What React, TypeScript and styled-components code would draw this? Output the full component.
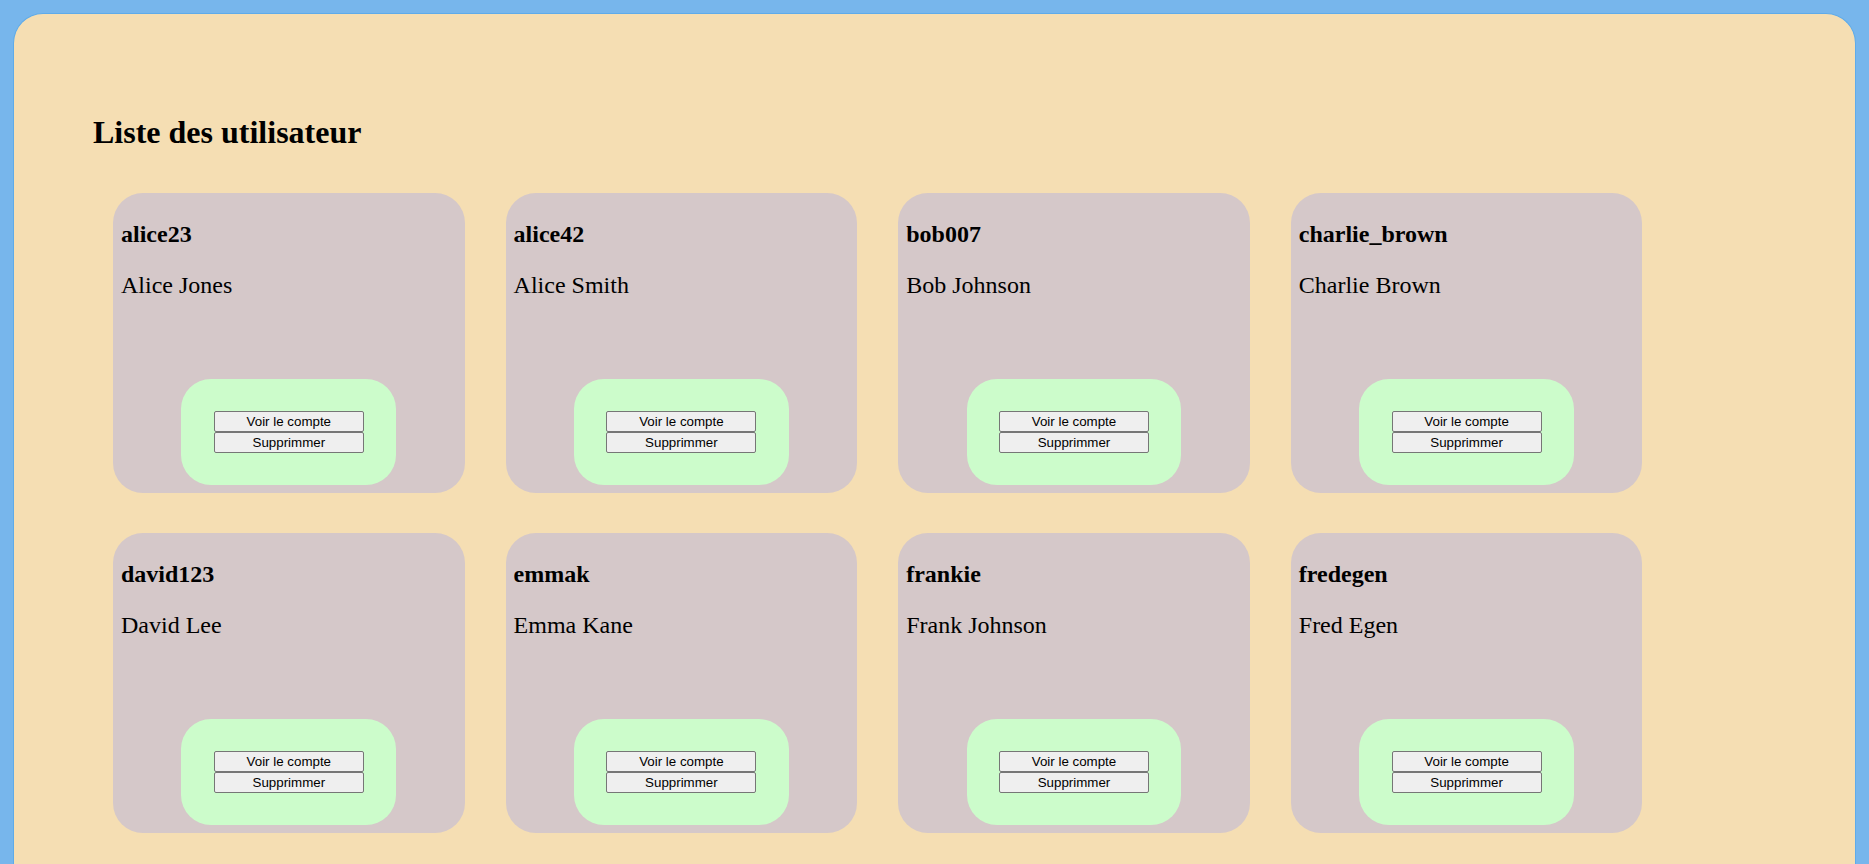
import React from "react";
import styled, { createGlobalStyle } from "styled-components";

const GlobalStyle = createGlobalStyle`
  html, body {
    margin: 0;
    padding: 0;
    background: #77b6ec;
  }
  body {
    font-family: "Liberation Serif", "Times New Roman", serif;
    color: #000;
  }
  #root {
    padding: 13px 13px 0 13px;
  }
`;

const Panel = styled.main`
  background: #f5deb3;
  border: 1px solid #5eabea;
  border-bottom: none;
  border-radius: 30px 30px 0 0;
  padding: 79px 79px 60px 79px;
  min-height: 900px;
`;

const Title = styled.h1`
  font-size: 32px;
  font-weight: bold;
  margin: 21.44px 0;
`;

const CardGrid = styled.div`
  display: flex;
  flex-wrap: wrap;
  column-gap: 41px;
  row-gap: 40px;
  padding: 20px;
`;

const Card = styled.section`
  box-sizing: border-box;
  width: 351.6px;
  height: 300px;
  background: #d5c8c9;
  border-radius: 30px;
  padding: 8px;
  display: flex;
  flex-direction: column;
`;

const Username = styled.h2`
  font-size: 24px;
  font-weight: bold;
  margin: 19.92px 0 0 0;
`;

const FullName = styled.p`
  font-size: 24px;
  margin: 24px 0;
`;

const Actions = styled.div`
  margin-top: auto;
  align-self: center;
  background: #ccfccb;
  border-radius: 30px;
  padding: 32px 32.4px;
  display: flex;
  flex-direction: column;
`;

const ActionButton = styled.button`
  box-sizing: border-box;
  width: 150px;
  height: 20.85px;
  padding: 0 6px;
  margin: 0;
  font-family: "Liberation Sans", Arial, sans-serif;
  font-size: 13.333px;
  line-height: 15px;
  color: #000;
  background: #efefef;
  border: 1px solid #767676;
  border-radius: 2px;
  cursor: pointer;
`;

type User = { username: string; name: string };

const users: User[] = [
  { username: "alice23", name: "Alice Jones" },
  { username: "alice42", name: "Alice Smith" },
  { username: "bob007", name: "Bob Johnson" },
  { username: "charlie_brown", name: "Charlie Brown" },
  { username: "david123", name: "David Lee" },
  { username: "emmak", name: "Emma Kane" },
  { username: "frankie", name: "Frank Johnson" },
  { username: "fredegen", name: "Fred Egen" },
];

export default function App() {
  return (
    <>
      <GlobalStyle />
      <Panel>
        <Title>Liste des utilisateur</Title>
        <CardGrid>
          {users.map((u) => (
            <Card key={u.username}>
              <Username>{u.username}</Username>
              <FullName>{u.name}</FullName>
              <Actions>
                <ActionButton>Voir le compte</ActionButton>
                <ActionButton>Supprimmer</ActionButton>
              </Actions>
            </Card>
          ))}
        </CardGrid>
      </Panel>
    </>
  );
}
